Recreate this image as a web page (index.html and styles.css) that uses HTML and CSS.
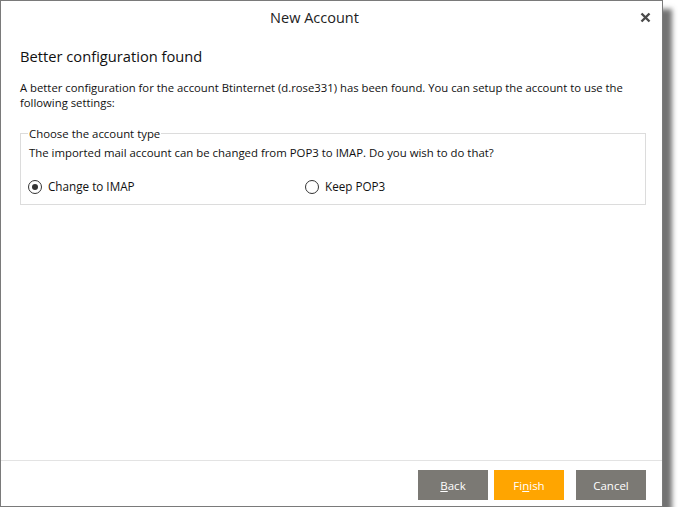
FILE: index.html
```html
<!DOCTYPE html>
<html>
<head>
<meta charset="utf-8">
<link rel="stylesheet" href="styles.css">
</head>
<body>
<div class="dialog">
  <div class="titlebar">
    <div class="title">New Account</div>
    <div class="close">
      <svg width="11" height="11" viewBox="0 0 11 11"><path d="M1.5 1.5 L9.5 9.5 M9.5 1.5 L1.5 9.5" stroke="#4a4a4a" stroke-width="2.4" stroke-linecap="butt"/></svg>
    </div>
  </div>
  <div class="content">
    <h1 class="heading">Better configuration found</h1>
    <p class="intro">A better configuration for the account Btinternet (d.rose331) has been found. You can setup the account to use the following settings:</p>
    <fieldset class="group">
      <legend>Choose the account type</legend>
      <div class="question">The imported mail account can be changed from POP3 to IMAP. Do you wish to do that?</div>
      <div class="options">
        <label class="option"><span class="radio checked"></span>Change to IMAP</label>
        <label class="option"><span class="radio"></span>Keep POP3</label>
      </div>
    </fieldset>
  </div>
  <div class="footer">
    <button class="btn gray"><u>B</u>ack</button>
    <button class="btn orange">Fi<u>n</u>ish</button>
    <button class="btn gray cancel">Cancel</button>
  </div>
</div>
</body>
</html>
```
FILE: styles.css
```css
html, body {
  margin: 0;
  padding: 0;
  background: #ffffff;
}
body {
  font-family: "Open Sans", "Noto Sans", sans-serif;
  color: #111111;
}
.dialog {
  width: 661px;
  height: 505px;
  border: 1px solid #7a7a7a;
  background: #ffffff;
  display: flex;
  flex-direction: column;
  box-shadow: 9px 9px 5px rgba(90, 90, 90, 0.85);
}
.titlebar {
  height: 32px;
  display: flex;
  align-items: center;
  flex: none;
}
.title {
  flex: 1;
  text-align: center;
  font-size: 14.5px;
  color: #222;
}
.close {
  width: 34px;
  display: flex;
  align-items: center;
  justify-content: flex-start;
  padding-left: 12px;
  box-sizing: border-box;
}
.content {
  flex: 1;
  padding: 12px 16px 0 19px;
}
.heading {
  margin: 0;
  font-size: 14.7px;
  font-weight: normal;
  line-height: 22px;
}
.intro {
  margin: 13px 0 0 0;
  font-size: 11.3px;
  line-height: 15px;
}
.group {
  margin: 16px 0 0 0;
  padding: 0 8px 10px 8px;
  border: 1px solid #dcdcdc;
  min-width: 0;
}
.group legend {
  padding: 0 1px;
  margin-left: -1px;
  font-size: 11.4px;
  line-height: 15px;
}
.question {
  font-size: 11.4px;
  line-height: 15px;
  margin-top: 4px;
}
.options {
  display: grid;
  grid-template-columns: 277px 1fr;
  margin-top: 19px;
}
.option {
  display: flex;
  align-items: center;
  font-size: 11.7px;
  line-height: 15px;
}
.radio {
  width: 12px;
  height: 12px;
  border: 1px solid #333;
  border-radius: 50%;
  margin-right: 6px;
  margin-left: -1px;
  box-sizing: content-box;
  position: relative;
  flex: none;
}
.radio.checked::after {
  content: "";
  position: absolute;
  left: 3px;
  top: 3px;
  width: 6px;
  height: 6px;
  border-radius: 50%;
  background: #333;
}
.footer {
  flex: none;
  height: 46px;
  box-sizing: border-box;
  border-top: 1px solid #e3e3e3;
  display: flex;
  justify-content: flex-end;
  align-items: flex-start;
  padding: 9px 16px 0 0;
  gap: 6px;
}
.btn {
  width: 70px;
  height: 30px;
  border: none;
  color: #ffffff;
  font-family: "Open Sans", "Noto Sans", sans-serif;
  font-size: 11.5px;
  padding: 0;
}
.btn.gray {
  background: #7b7974;
}
.btn.orange {
  background: #ffa500;
}
.btn.cancel {
  margin-left: 6px;
}
```
